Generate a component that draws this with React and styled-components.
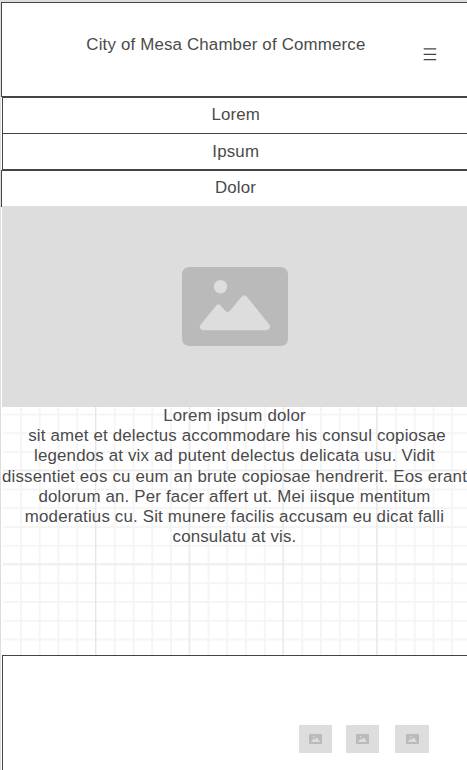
import React from "react";
import styled, { createGlobalStyle } from "styled-components";

const GlobalStyle = createGlobalStyle`
  * { box-sizing: border-box; }
  html, body { margin: 0; padding: 0; overflow: hidden; background: #fff; }
`;

const ink = "#444";
const textColor = "#4a4a4a";

const Page = styled.div`
  width: 467px;
  height: 770px;
  overflow: hidden;
  display: flex;
  flex-direction: column;
  border-top: 2px solid #ddd;
  border-left: 1px solid #ddd;
  background: #fff;
  color: ${textColor};
  font-family: "Liberation Sans", Arial, sans-serif;
  font-size: 16.875px;
  letter-spacing: 0.175px;
  line-height: 20.25px;
`;

const Header = styled.header`
  flex: none;
  height: 95px;
  display: flex;
  border: 1px solid ${ink};
  border-right: 0;
`;

const Title = styled.h1`
  margin: 32px 0 0 84.3px;
  width: 281.7px;
  font: inherit;
  white-space: nowrap;
`;

const MenuButton = styled.button`
  width: 14px;
  height: 13px;
  margin: 45px 0 0 55px;
  padding: 0;
  border: 0;
  background: none;
  display: flex;
`;

const Nav = styled.nav`
  flex: none;
  display: flex;
  flex-direction: column;
  margin-bottom: -1px;
`;

const NavItem = styled.a`
  height: ${(p) => p.$height}px;
  margin-left: ${(p) => (p.$outset ? 0 : 1)}px;
  padding: ${(p) => p.$pad}px 0 0 ${(p) => (p.$outset ? 2 : 1.5)}px;
  border-left: 1px solid ${ink};
  border-top: ${(p) => (p.$top ? 1 : 0)}px solid ${ink};
  border-bottom: ${(p) => (p.$bottom ? 1 : 0)}px solid ${ink};
  text-align: center;
`;

const Hero = styled.div`
  flex: none;
  height: 201px;
  margin-left: 1px;
  display: flex;
  justify-content: center;
  padding: 61px 0 0 1px;
  background: #ddd;
`;

const Content = styled.main`
  flex: none;
  height: 248px;
  margin-left: 1px;
  background-repeat: no-repeat, repeat, repeat, repeat, repeat;
  background-image:
    linear-gradient(#fff, #fff),
    linear-gradient(90deg, #e6e6e6 1px, transparent 1px),
    linear-gradient(#e9e9e9 1px, transparent 1px),
    linear-gradient(90deg, #f5f5f5 1.5px, transparent 1.5px),
    linear-gradient(#f5f5f5 1.5px, transparent 1.5px);
  background-size: 1px 100%, 93.75px 93.75px, 93.75px 93.75px, 18.75px 18.75px, 18.75px 18.75px;
  background-position: 0 0, 93px 0, 0 62.75px, 18px 0, 0 6.5px;
`;

const Copy = styled.p`
  margin: -1.05px 0 0;
  width: 465px;
  display: flex;
  flex-direction: column;
  align-items: center;
  line-height: 20.2px;
  white-space: nowrap;
`;

const Line = styled.span`
  padding-left: ${(p) => p.$indent || 0}px;
`;

const Footer = styled.footer`
  flex: 1;
  margin-left: 1px;
  padding: 69px 0 0 296px;
  display: flex;
  align-items: flex-start;
  border-top: 1px solid ${ink};
  border-left: 1px solid ${ink};
`;

const Thumb = styled.div`
  width: ${(p) => p.$width}px;
  height: 28px;
  margin-right: ${(p) => p.$gap}px;
  display: flex;
  align-items: center;
  justify-content: center;
  background: #ddd;
`;

function Picture({ width, height }) {
  return (
    <svg width={width} height={height} viewBox="0 0 106 79" preserveAspectRatio="none">
      <rect width="106" height="79" rx="7" fill="#bababa" />
      <circle cx="38.5" cy="19.7" r="6.7" fill="#ddd" />
      <path
        d="M18.8 57.5 L34 38.8 Q36.4 35.8 38.8 38.8 L43.4 44.1 Q45.5 46.4 47.6 44.1 L59.5 30 Q62.3 26.7 65.1 30 L87.2 57.5 C89.4 60.5 87 63.2 84.3 63.2 L21.5 63.2 C18.5 63.2 16.5 60.3 18.8 57.5 Z"
        fill="#ddd"
      />
    </svg>
  );
}

const lines = [
  { text: "Lorem ipsum dolor" },
  { text: "sit amet et delectus accommodare his consul copiosae", indent: 5 },
  { text: "legendos at vix ad putent delectus delicata usu. Vidit" },
  { text: "dissentiet eos cu eum an brute copiosae hendrerit. Eos erant" },
  { text: "dolorum an. Per facer affert ut. Mei iisque mentitum" },
  { text: "moderatius cu. Sit munere facilis accusam eu dicat falli" },
  { text: "consulatu at vis." },
];

export default function App() {
  return (
    <>
      <GlobalStyle />
      <Page>
        <Header>
          <Title>City of Mesa Chamber of Commerce</Title>
          <MenuButton aria-label="Menu">
            <svg width="14" height="13" viewBox="0 0 14 13">
              <path d="M0.7 0.9H13.2M0.7 6.4H13.2M0.7 11.6H13.2" stroke={ink} strokeWidth="1.4" />
            </svg>
          </MenuButton>
        </Header>
        <Nav>
          <NavItem $height={37} $pad={7} $top $bottom>Lorem</NavItem>
          <NavItem $height={36} $pad={8} $bottom>Ipsum</NavItem>
          <NavItem $height={37} $pad={7} $top $outset>Dolor</NavItem>
        </Nav>
        <Hero>
          <Picture width={106} height={79} />
        </Hero>
        <Content>
          <Copy>
            {lines.map(({ text, indent }) => (
              <Line key={text} $indent={indent}>{text}</Line>
            ))}
          </Copy>
        </Content>
        <Footer>
          <Thumb $width={33} $gap={14}><Picture width={13} height={10} /></Thumb>
          <Thumb $width={33} $gap={16}><Picture width={13} height={10} /></Thumb>
          <Thumb $width={34} $gap={0}><Picture width={13} height={10} /></Thumb>
        </Footer>
      </Page>
    </>
  );
}
